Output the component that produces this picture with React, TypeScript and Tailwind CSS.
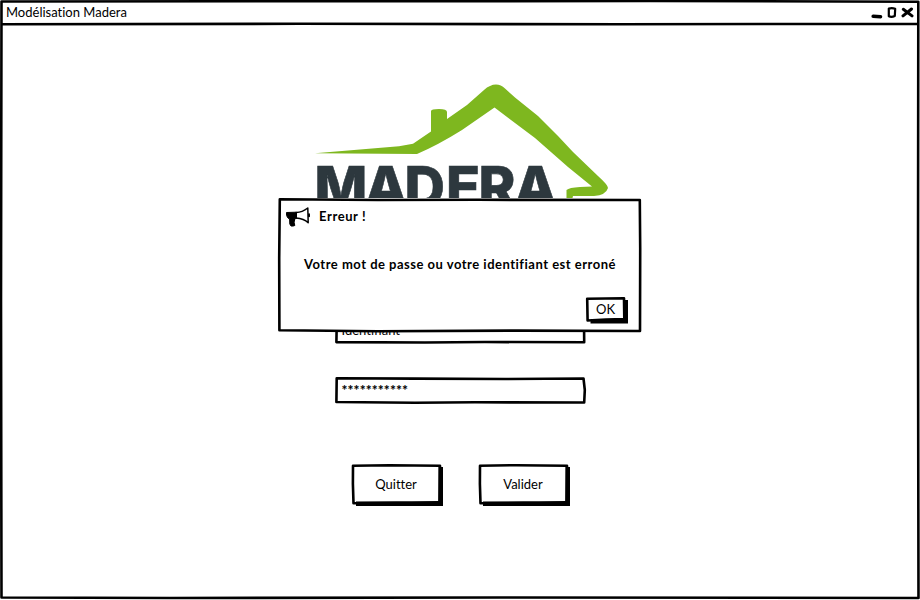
import React from "react";

const label =
  "font-['Lato','Liberation_Sans',sans-serif] [font-variant-ligatures:none] text-black whitespace-nowrap";

/* Hand-drawn outline laid over a box */
function Sketch({ w, h, d }: { w: number; h: number; d: string }) {
  return (
    <svg
      className="pointer-events-none absolute left-0 top-0 overflow-visible"
      width={w}
      height={h}
      viewBox={`0 0 ${w} ${h}`}
      fill="none"
      stroke="#000"
      strokeWidth="2.6"
      strokeLinejoin="round"
      strokeLinecap="round"
    >
      <path d={d} />
    </svg>
  );
}

function Logo() {
  return (
    <svg className="block h-[125px] w-[320px]" viewBox="305 75 320 125">
      <path
        fill="#7eb71f"
        d="M315 153.3 L399 146.3 L413 143.7 L431 131.5 V111 Q431 109 439 109 Q447 109 447 112 V119 L467 105 L484 90 Q490 84.5 496 84.5 Q501 84.5 505 88.5 L515 97.5 L538 116 L558 136 L573 152 L598 176 Q608 185 608 188 Q606 195 594 196 L573 196 L572 200 H566.5 V190 Q569 187.5 580 187 L592 186.5 L568 167 L535 138 L494.5 107.5 L462 130 Q438 145 417 154 Z"
      />
      <text
        x="314.5 364.5 404.5 446 478.5 514"
        y="207"
        fontFamily="Inter, 'Liberation Sans', sans-serif"
        fontWeight="800"
        fontSize="56"
        fill="#2d383e"
        stroke="#2d383e"
        strokeWidth="0.6"
      >
        MADERA
      </text>
    </svg>
  );
}

function Megaphone() {
  return (
    <svg className="block h-5 w-6" viewBox="0 0 24 20" fill="none" stroke="#000" strokeLinejoin="round" strokeLinecap="round">
      <path fill="#000" d="M.8 5.5 L10.5 5.2 V11.5 L8.5 12 V14 L8 15 L8.8 18.5 Q7 19.4 5 19 L3.8 17 L3.6 12 L2 11 L.8 9 Z" />
      <path strokeWidth="1.5" d="M10 5.4 Q16 5.5 21.8 1 L22.2 15.8 Q18 11.5 10 11" />
      <path strokeWidth="2" d="M23 7.3 V9.2" />
    </svg>
  );
}

function ActionButton({ text }: { text: string }) {
  return (
    <button className="relative flex h-[41px] w-[91px] items-center justify-center pb-[2px] pr-[2px]">
      <Sketch w={91} h={41} d="M1.5 1.7 L38 1.2 L88.5 1.7 L88 38.5 L45 38.8 L2 39.3 L1.4 20 Z" />
      <svg className="absolute left-0 top-0 overflow-visible" width="91" height="41">
        <path d="M87 3 H91.5 V42 H4.5 V37.5 L60 37.5 L87 37 Z" />
      </svg>
      <span className={`${label} text-[13px] leading-4`}>{text}</span>
    </button>
  );
}

export default function App() {
  return (
    <div className="relative flex h-[600px] w-[920px] flex-col overflow-hidden bg-white">
      <Sketch w={920} h={600} d="M1.5 1.5 L330 1.2 L650 1 L918.3 1.7 L918 300 L918.5 598 L500 597.5 L170 598 L1.5 597.5 L1 300 Z M1.5 24.2 L300 23.8 L620 24.3 L918 23.8" />
      <header className="flex h-[25px] shrink-0 items-center justify-between pl-1.5 pr-1.5">
        <span className={`${label} pb-px text-[13px] leading-4`}>Modélisation Madera</span>
        <svg className="h-4 w-[44px]" viewBox="0 0 44 16" fill="none" stroke="#000" strokeLinecap="round" strokeLinejoin="round">
          <path strokeWidth="3.6" d="M3.2 11.3 L10.5 11.7" />
          <path strokeWidth="2.2" d="M18.8 3.6 Q22 2.6 25.2 3.8 L24.8 11 Q21.5 12.5 18.8 11.2 Z" />
          <path strokeWidth="3" d="M33.3 4.3 L42 10.9 M41.5 4 L33 10.9" />
        </svg>
      </header>

      <main className="flex flex-col items-center pt-[50px]">
        <div className="flex w-[320px] translate-x-[5px] justify-center">
          <Logo />
        </div>

        <div className="relative mt-[118px] flex h-[26px] w-[251px] items-center px-[7px] pb-[3px]">
          <div className={`${label} text-[13px] leading-4`}>Identifiant</div>
          <Sketch w={251} h={26} d="M1.8 1.2 L249 1.5 L249.2 24.3 L150 24 L90 24.5 L1.4 24.1 Z" />
        </div>

        <div className="relative mt-[33px] flex h-[27px] w-[251px] items-center px-[7px] pb-[2px]">
          <div className="whitespace-nowrap font-['Lato'] text-[14px] font-black leading-4 tracking-[0.1px] text-black">***********</div>
          <Sketch w={251} h={27} d="M1.7 1.2 L80 1.6 L170 2 L248.5 1.5 L249.8 13 L249.2 25.5 L140 25.3 L80 25.8 L1.4 25 Z" />
        </div>

        <div className="mt-[60px] flex translate-x-[0.5px] gap-9">
          <ActionButton text="Quitter" />
          <ActionButton text="Valider" />
        </div>
      </main>

      <section role="alertdialog" className="absolute left-[278px] top-[198px] flex h-[134px] w-[363px] flex-col bg-white">
        <Sketch w={363} h={134} d="M1.8 1.3 L100 2 L200 1.8 L361.8 2 L362.2 50 L362 133 L240 132.6 L100 133.2 L1.4 132.2 L1.2 60 Z" />
        <div className="flex h-[37px] items-center gap-[9px] pl-2">
          <Megaphone />
          <h1 className={`${label} pb-[2px] text-[13px] font-bold leading-4 tracking-[0.6px]`}>Erreur !</h1>
        </div>
        <p className={`${label} mt-[21px] pl-px text-center text-[13px] font-bold leading-4 tracking-[0.5px]`}>
          Votre mot de passe ou votre identifiant est erroné
        </p>
        <button className="relative mr-[13px] mt-[25px] flex h-[27px] w-[42px] items-center justify-center self-end pb-1 pr-[3px]">
          <Sketch w={42} h={27} d="M1.2 1.7 L38 1.2 L38.3 22 L20 22.5 L1.6 23.5 Z" />
          <svg className="absolute left-0 top-0" width="42" height="27">
            <path d="M38 3 H42 V26.5 H4.5 V23 L30 22.5 L38 21.5 Z" />
          </svg>
          <span className={`${label} text-[13px] leading-4`}>OK</span>
        </button>
      </section>
    </div>
  );
}
